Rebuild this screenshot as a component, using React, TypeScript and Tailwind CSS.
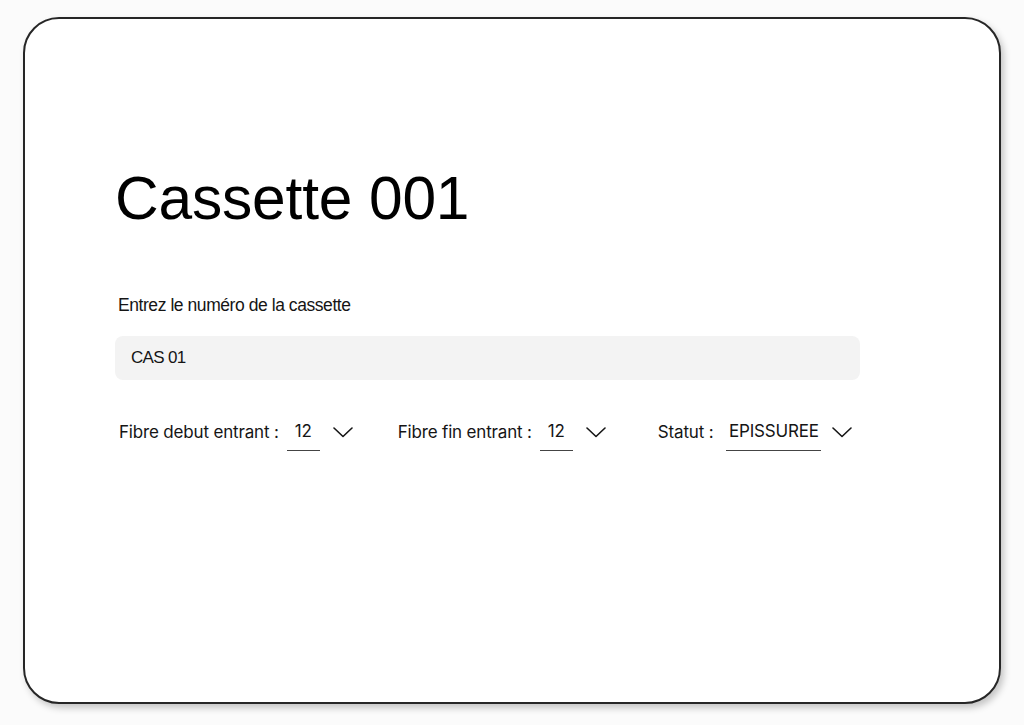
interface SelectField {
  label: string;
  value: string;
  box: string;
  chevron: string;
}

function Chevron({ className }: { className: string }) {
  return (
    <svg width="20" height="11" viewBox="0 0 20 11" fill="none" className={`mt-[7px] text-[#151515] ${className}`}>
      <polyline points="1,1 10,9.5 19,1" stroke="currentColor" strokeWidth="1.6" strokeLinecap="round" strokeLinejoin="round" />
    </svg>
  );
}

function InlineSelect({ label, value, box, chevron }: SelectField) {
  return (
    <div className="flex items-start">
      <span className="text-[17px] leading-6 tracking-[-0.01em] text-[#151515]">{label}</span>
      <div className={`flex h-[31px] items-start justify-center border-b border-[#444] ${box}`}>
        <span className="-mt-[1px] text-[17px] leading-6 tracking-[-0.01em] text-[#151515]">{value}</span>
      </div>
      <Chevron className={chevron} />
    </div>
  );
}

export default function App() {
  return (
    <div className="h-[725px] w-[1024px] bg-[#fbfbfb] pl-[23px] pt-[17px] font-['Liberation_Sans',Arial,sans-serif]">
      <div className="h-[687px] w-[978px] rounded-[36px] border-2 border-[#262626] bg-white pl-[90px] pt-[149px] shadow-[3px_4px_7px_rgba(0,0,0,0.22)]">
        {/* Title */}
        <h1 className="text-[60.5px] leading-[60px] tracking-[-0.003em] text-black">Cassette 001</h1>

        {/* Cassette number */}
        <p className="ml-[3px] mt-[67px] text-[17.5px] leading-5 tracking-[-0.025em] text-[#151515]">
          Entrez le numéro de la cassette
        </p>
        <div className="mt-[21px] flex h-[44px] w-[745px] items-center rounded-[8px] bg-[#f3f3f3] pl-[16px]">
          <span className="text-[17px] tracking-[-0.04em] text-[#151515]">CAS 01</span>
        </div>

        {/* Fibre selects */}
        <div className="ml-[4px] mt-[40px] flex items-start font-['Inter',sans-serif]">
          <InlineSelect label="Fibre debut entrant :" value="12" box="ml-[8px] w-[33px]" chevron="ml-[13px]" />
          <div className="ml-[45px]">
            <InlineSelect label="Fibre fin entrant :" value="12" box="ml-[8px] w-[33px]" chevron="ml-[13px]" />
          </div>
          <div className="ml-[52px]">
            <InlineSelect label="Statut :" value="EPISSUREE" box="ml-[13px] w-[95px]" chevron="ml-[11px]" />
          </div>
        </div>
      </div>
    </div>
  );
}
